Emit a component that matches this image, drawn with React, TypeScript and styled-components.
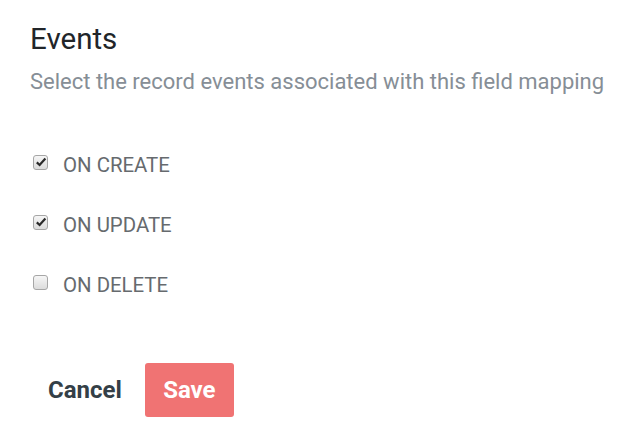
import styled, { createGlobalStyle } from 'styled-components';
import { useState } from 'react';

const GlobalStyle = createGlobalStyle`
  body {
    margin: 0;
    background: #ffffff;
    font-family: Roboto, 'Liberation Sans', sans-serif;
  }
`;

const Panel = styled.div`
  padding: 21px 30px 0 30px;
  display: flex;
  flex-direction: column;
`;

const Title = styled.h2`
  margin: 0;
  font-size: 29.5px;
  font-weight: 400;
  line-height: 36px;
  color: #212529;
`;

const Subtitle = styled.p`
  margin: 11px 0 0 0;
  font-size: 22px;
  line-height: 28px;
  color: #868e96;
  white-space: nowrap;
`;

const EventList = styled.div`
  display: flex;
  flex-direction: column;
  gap: 32px;
  margin-top: 55px;
  padding-left: 3px;
`;

const EventRow = styled.label`
  display: flex;
  align-items: center;
  gap: 15px;
  cursor: pointer;
  height: 28px;
`;

const Box = styled.span<{ $checked: boolean }>`
  width: 15px;
  height: 15px;
  box-sizing: border-box;
  border: 1px solid #a6a6a6;
  border-radius: 3px;
  background: linear-gradient(#f6f6f6, #dcdcdc);
  display: flex;
  align-items: center;
  justify-content: center;
  margin-top: -6px;
  flex-shrink: 0;
`;

const EventLabel = styled.span`
  font-size: 20.4px;
  color: #666a6e;
  line-height: 28px;
`;

const Actions = styled.div`
  display: flex;
  align-items: center;
  gap: 23px;
  margin-top: 64px;
  padding-left: 18px;
`;

const CancelButton = styled.button`
  border: none;
  background: none;
  padding: 0;
  font-family: inherit;
  font-size: 24px;
  font-weight: 700;
  color: #343f47;
  cursor: pointer;
`;

const SaveButton = styled.button`
  border: none;
  background: #f07373;
  color: #ffffff;
  width: 89px;
  height: 54px;
  border-radius: 3px;
  font-family: inherit;
  font-size: 24px;
  font-weight: 700;
  cursor: pointer;
`;

function Check({ checked }: { checked: boolean }) {
  return (
    <Box $checked={checked}>
      {checked && (
        <svg width="12" height="12" viewBox="0 0 12 12">
          <path d="M1.8 6.4 L4.6 9 L10.4 2.4" fill="none" stroke="#2b2b2b" strokeWidth="2.2" />
        </svg>
      )}
    </Box>
  );
}

export default function App() {
  const [events, setEvents] = useState([
    { name: 'ON CREATE', on: true },
    { name: 'ON UPDATE', on: true },
    { name: 'ON DELETE', on: false },
  ]);

  const toggle = (i: number) =>
    setEvents((prev) => prev.map((e, idx) => (idx === i ? { ...e, on: !e.on } : e)));

  return (
    <>
      <GlobalStyle />
      <Panel>
        <Title>Events</Title>
        <Subtitle>Select the record events associated with this field mapping</Subtitle>
        <EventList>
          {events.map((e, i) => (
            <EventRow key={e.name} onClick={() => toggle(i)}>
              <Check checked={e.on} />
              <EventLabel>{e.name}</EventLabel>
            </EventRow>
          ))}
        </EventList>
        <Actions>
          <CancelButton>Cancel</CancelButton>
          <SaveButton>Save</SaveButton>
        </Actions>
      </Panel>
    </>
  );
}
